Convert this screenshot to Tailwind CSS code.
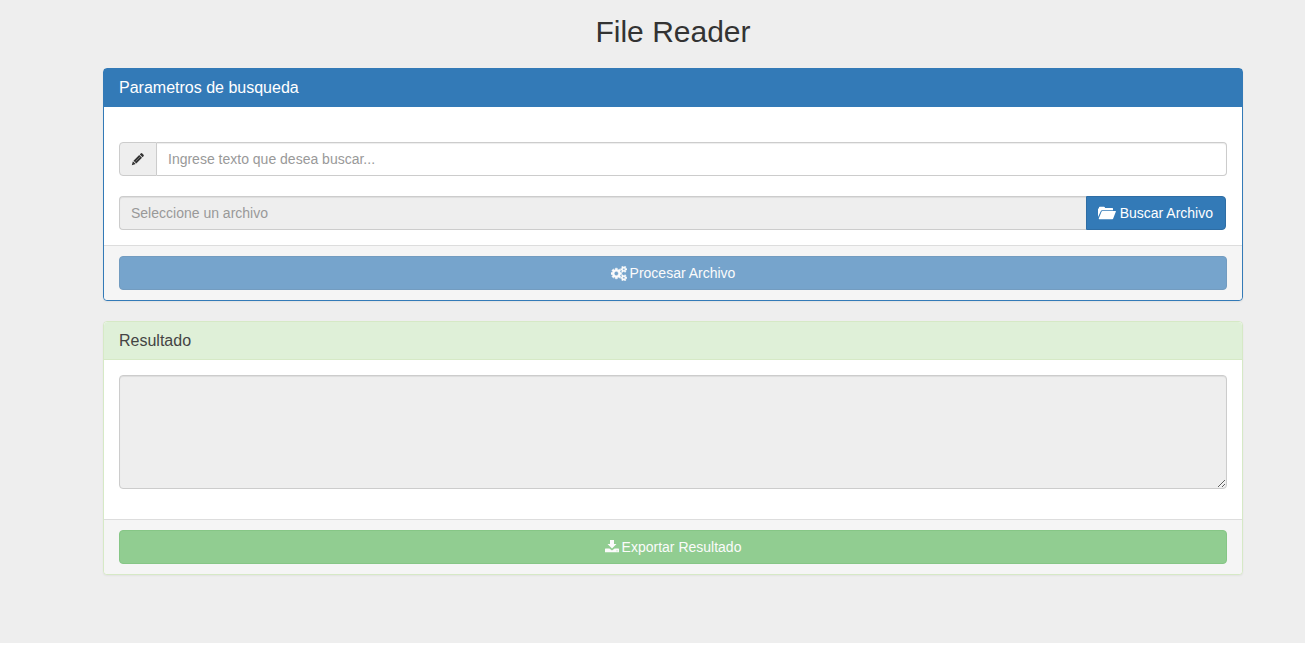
<!DOCTYPE html>
<html lang="es">
<head>
<meta charset="utf-8">
<meta name="viewport" content="width=device-width, initial-scale=1">
<title>File Reader</title>
<script src="https://cdn.jsdelivr.net/npm/@tailwindcss/browser@4"></script>
</head>
<body class="bg-white font-['Liberation_Sans',Arial,sans-serif] text-sm text-[#333]">
<main class="bg-[#eee] pt-3 pb-[68px] pl-[41px]">
  <div class="mx-auto max-w-[1140px]">
    <h1 class="mb-4 text-center text-[30px] leading-10">File Reader</h1>

    <form class="mb-5 rounded border border-[#337ab7] bg-white shadow-xs">
      <h2 class="bg-[#337ab7] px-[15px] py-[10px] text-base leading-[18px] text-white">Parametros de busqueda</h2>
      <div class="flex flex-col gap-5 px-[15px] pt-[35px] pb-[15px]">
        <div class="flex h-[34px]">
          <label for="texto" class="flex w-[38px] shrink-0 items-center justify-center rounded-l border border-[#ccc] bg-[#eee]" aria-label="Texto a buscar">
            <svg class="size-[14px]" viewBox="0 0 14 14" fill="#333" aria-hidden="true"><path d="M9.700 1.500q.8-.8 1.600 0l1.200 1.200q.8.800 0 1.600l-.9.900-2.800-2.800zM8.200 3l2.800 2.800-5.700 5.700-2.800-2.800zM1.900 9.300l2.800 2.800-3.900 1.100z"/><path d="M4.700 9.300l4.300-4.300" stroke="#999" stroke-width=".6"/></svg>
          </label>
          <input id="texto" type="text" placeholder="Ingrese texto que desea buscar..." class="min-w-0 flex-1 rounded-r border border-l-0 border-[#ccc] bg-white px-[11px] shadow-[inset_0_1px_1px_rgba(0,0,0,0.075)] placeholder:text-[#999]">
        </div>
        <div class="flex h-[34px] pr-px">
          <input type="text" readonly aria-label="Archivo seleccionado" placeholder="Seleccione un archivo" class="min-w-0 flex-1 rounded-l border border-r-0 border-[#ccc] bg-[#eee] px-[11px] shadow-[inset_0_1px_1px_rgba(0,0,0,0.075)] placeholder:text-[#999]">
          <button type="button" class="flex shrink-0 items-center gap-1 rounded-r border border-[#2e6da4] bg-[#337ab7] pr-3 pl-[11px] text-white">
            <svg class="h-[14px] w-[18px]" viewBox="0 0 18 14" fill="currentColor" aria-hidden="true"><path d="M0 11V2.500h1V1.500q0-.8.800-.8h4.200q.6 0 .8.600l.3.700h7.300q.6 0 .6.600V4.300H4q-.8 0-1.100.8z"/><path d="M4.400 5h13.100q.6 0 .4.600l-2.700 7q-.2.600-.8.600H1.200q-.6 0-.4-.6l2.800-7q.2-.6.800-.6z"/></svg>
            Buscar Archivo
          </button>
        </div>
      </div>
      <div class="rounded-b border-t border-[#ddd] bg-[#f5f5f5] px-[15px] py-[10px]">
        <button type="submit" disabled class="flex h-[34px] w-full items-center justify-center gap-[3px] rounded border border-[#2e6da4] bg-[#337ab7] text-white opacity-65">
          <svg class="h-[15px] w-[16px]" viewBox="0 0 1920 1792" fill="currentColor" stroke="currentColor" stroke-width="60" aria-hidden="true"><path d="M896 896q0-106-75-181t-181-75-181 75-75 181 75 181 181 75 181-75 75-181zm768 512q0-52-38-90t-90-38-90 38-38 90q0 53 37.500 90.500t90.500 37.500 90.500-37.500 37.500-90.500zm0-1024q0-52-38-90t-90-38-90 38-38 90q0 53 37.500 90.500t90.500 37.500 90.500-37.500 37.500-90.500zm-384 421v185q0 10-7 19.500t-16 10.500l-155 24q-11 35-32 76 34 48 90 115 7 11 7 20 0 12-7 19-23 30-82.500 89.500t-78.500 59.500q-11 0-21-7l-115-90q-37 19-77 31-11 108-23 155-7 24-30 24h-186q-11 0-20-7.500t-10-17.500l-23-153q-34-10-75-31l-118 89q-7 7-20 7-11 0-21-8-144-133-144-160 0-9 7-19 10-14 41-53t47-61q-23-44-35-82l-152-24q-10-1-17-9.500t-7-19.500v-185q0-10 7-19.500t16-10.500l155-24q11-35 32-76-34-48-90-115-7-11-7-20 0-12 7-20 22-30 82-89t79-59q11 0 21 7l115 90q34-18 77-32 11-108 23-154 7-24 30-24h186q11 0 20 7.500t10 17.500l23 153q34 10 75 31l118-89q8-7 20-7 11 0 21 8 144 133 144 160 0 8-7 19-12 16-42 54t-45 60q23 48 34 82l152 23q10 2 17 10.500t7 19.500zm640 533v140q0 16-149 31-12 27-30 52 51 113 51 138 0 4-4 7-122 71-124 71-8 0-46-47t-52-68q-20 2-30 2t-30-2q-14 21-52 68t-46 47q-2 0-124-71-4-3-4-7 0-25 51-138-18-25-30-52-149-15-149-31v-140q0-16 149-31 13-29 30-52-51-113-51-138 0-4 4-7 4-2 35-20t59-34 30-16q8 0 46 46.500t52 67.500q20-2 30-2t30 2q51-71 92-112l6-2q4 0 124 70 4 3 4 7 0 25-51 138 17 23 30 52 149 15 149 31zm0-1024v140q0 16-149 31-12 27-30 52 51 113 51 138 0 4-4 7-122 71-124 71-8 0-46-47t-52-68q-20 2-30 2t-30-2q-14 21-52 68t-46 47q-2 0-124-71-4-3-4-7 0-25 51-138-18-25-30-52-149-15-149-31v-140q0-16 149-31 13-29 30-52-51-113-51-138 0-4 4-7 4-2 35-20t59-34 30-16q8 0 46 46.500t52 67.500q20-2 30-2t30 2q51-71 92-112l6-2q4 0 124 70 4 3 4 7 0 25-51 138 17 23 30 52 149 15 149 31z"/></svg>
          Procesar Archivo
        </button>
      </div>
    </form>

    <section class="rounded border border-[#d6e9c6] bg-white shadow-xs">
      <h2 class="rounded-t border-b border-[#d6e9c6] bg-[#dff0d8] px-[15px] py-[10px] text-base leading-[17px] text-[#444]"><label for="resultado">Resultado</label></h2>
      <div class="px-[15px] pt-[15px] pb-[30px]">
        <textarea id="resultado" readonly class="block h-[114px] w-full resize rounded border border-[#ccc] bg-[#eee] px-3 py-[6px] shadow-[inset_0_1px_1px_rgba(0,0,0,0.075)]"></textarea>
      </div>
      <div class="rounded-b border-t border-[#ddd] bg-[#f5f5f5] px-[15px] py-[10px]">
        <button type="button" disabled class="flex h-[34px] w-full items-center justify-center gap-[3px] rounded border border-[#4cae4c] bg-[#5cb85c] text-white opacity-65">
          <svg class="size-[14px]" viewBox="0 0 14 14" fill="currentColor" aria-hidden="true"><path d="M5 0h4v4h2.500L7 8.500 2.500 4H5z"/><path fill-rule="evenodd" d="M.4 8.500h4L7 10.500l2.600-2h4q.4 0 .4.400v3q0 .4-.4.400H.4q-.4 0-.4-.4v-3q0-.4.400-.4zM11.500 10.500v.7h1v-.7z"/></svg>
          Exportar Resultado
        </button>
      </div>
    </section>
  </div>
</main>
</body>
</html>
